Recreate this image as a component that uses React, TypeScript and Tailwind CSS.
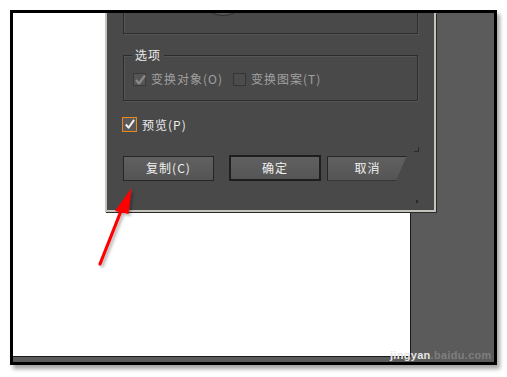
import React from "react";

const font = { fontFamily: '"Noto Sans CJK SC", "Liberation Sans", sans-serif' };

function Check({ color }: { color: string }) {
  return (
    <svg width="12" height="12" viewBox="0 0 12 12" className="absolute left-0 top-0">
      <polyline points="2,6 5,9.5 11,1.5" fill="none" stroke={color} strokeWidth="2.2" strokeLinejoin="round" />
    </svg>
  );
}

export default function App() {
  return (
    <div className="relative w-[507px] h-[377px] bg-white overflow-hidden" style={font}>
      <div className="absolute left-[10px] top-[10px] w-[487px] h-[355px] border-[3px] border-black bg-[#5b5b5b] shadow-[3px_4px_4px_rgba(0,0,0,0.35)] overflow-hidden">
        {/* canvas area */}
        <div className="flex flex-col h-full">
          <div className="flex h-[344px]">
            <div className="w-[398px] h-full bg-white border-r border-b border-[#1a1a1a]" />
            <div className="flex-1" />
          </div>
          <div className="flex-1 relative">
            <div className="absolute left-[377px] top-[-7px] text-[11px] font-bold leading-none text-[#e6e6e6] tracking-[0.3px]" style={{ fontFamily: '"Liberation Sans", sans-serif' }}>
              jingyan<span className="opacity-25">.baidu.com</span>
            </div>
          </div>
        </div>

        {/* dialog window */}
        <div className="absolute left-[92px] top-0 w-[331px] h-[199px] bg-[#494949] border-l-2 border-r-2 border-b-2 border-[#c4c4bc] shadow-[1px_1px_0_#2a2a2a]">
          <div className="relative flex flex-col pl-[16px] h-full">
            {/* top group box */}
            <div className="relative mt-[-20px] h-[41px] w-[295px] border border-[#2c2c2c] shadow-[inset_1px_1px_0_#555,1px_1px_0_#555]">
              <div className="absolute left-[74px] top-[-28px] w-[50px] h-[50px] rounded-full bg-[#565656] border border-[#2e2e2e]" />
            </div>

            {/* 选项 group */}
            <div className="relative mt-[21px] h-[46px] w-[295px] border border-[#2c2c2c] shadow-[inset_1px_1px_0_#555,1px_1px_0_#555]">
              <div className="absolute left-[8px] top-[-9px] px-[3px] bg-[#494949] text-[12px] leading-[16px] text-[#ececec] tracking-[1px]">
                选项
              </div>
              <div className="flex items-center pt-[16px] pl-[9px]">
                <div className="relative w-[13px] h-[13px] bg-[#555] border border-[#3a3a3a]">
                  <Check color="#8a8a8a" />
                </div>
                <span className="ml-[5px] text-[12px] leading-[14px] text-[#a0a0a0] tracking-[1px]">变换对象(O)</span>
                <div className="ml-[10px] w-[13px] h-[13px] bg-[#4c4c4c] border border-[#353535]" />
                <span className="ml-[5px] text-[12px] leading-[14px] text-[#a0a0a0] tracking-[1px]">变换图案(T)</span>
              </div>
            </div>

            {/* preview */}
            <div className="flex items-center mt-[16px] ml-[-1px]">
              <div className="relative w-[15px] h-[15px] bg-[#5a5a5a] border border-[#e8891c] p-[1px]">
                <div className="relative w-[11px] h-[11px]">
                  <svg width="11" height="11" viewBox="0 0 12 12" className="absolute left-0 top-0">
                    <polyline points="2,6 5,9.5 11,1" fill="none" stroke="#f2f2f2" strokeWidth="2.2" strokeLinejoin="round" />
                  </svg>
                </div>
              </div>
              <span className="ml-[5px] text-[12px] leading-[14px] text-[#ececec] tracking-[1px]">预览(P)</span>
            </div>

            {/* buttons */}
            <div className="flex items-center mt-[23px] h-[26px]">
              <button className="w-[91px] h-[25px] border border-[#262626] bg-gradient-to-b from-[#606060] to-[#555555] text-[12px] text-[#f0f0f0] tracking-[1px]">
                复制(C)
              </button>
              <button className="ml-[15px] w-[92px] h-[26px] border-2 border-[#1e1e1e] bg-gradient-to-b from-[#606060] to-[#555555] text-[12px] text-[#f0f0f0] tracking-[1px]">
                确定
              </button>
              <button
                className="ml-[6px] w-[81px] h-[25px] border border-[#262626] bg-gradient-to-b from-[#606060] to-[#555555] text-[12px] text-[#f0f0f0] tracking-[1px]"
                style={{ clipPath: "polygon(0 0, 80px 0, 69px 100%, 0 100%)" }}
              >
                取消
              </button>
            </div>

            {/* grip marks */}
            <div className="absolute left-[307px] top-[134px] w-[5px] h-[5px] border-r border-b border-[#2a2a2a]" />
            <div className="absolute left-[309px] top-[187px] w-[2px] h-[3px] bg-[#2a2a2a]" />
          </div>
        </div>
      </div>

      {/* red arrow */}
      <svg className="absolute left-0 top-0" width="507" height="377" viewBox="0 0 507 377">
        <defs>
          <filter id="sh" x="-50%" y="-50%" width="200%" height="200%">
            <feDropShadow dx="2" dy="2" stdDeviation="1.5" floodColor="#000" floodOpacity="0.3" />
          </filter>
        </defs>
        <g filter="url(#sh)">
          <line x1="100" y1="264" x2="123" y2="206" stroke="#ff0000" strokeWidth="3.2" strokeLinecap="round" />
          <polygon points="131.5,188 115,211 128.5,214" fill="#ff0000" />
        </g>
      </svg>
    </div>
  );
}
